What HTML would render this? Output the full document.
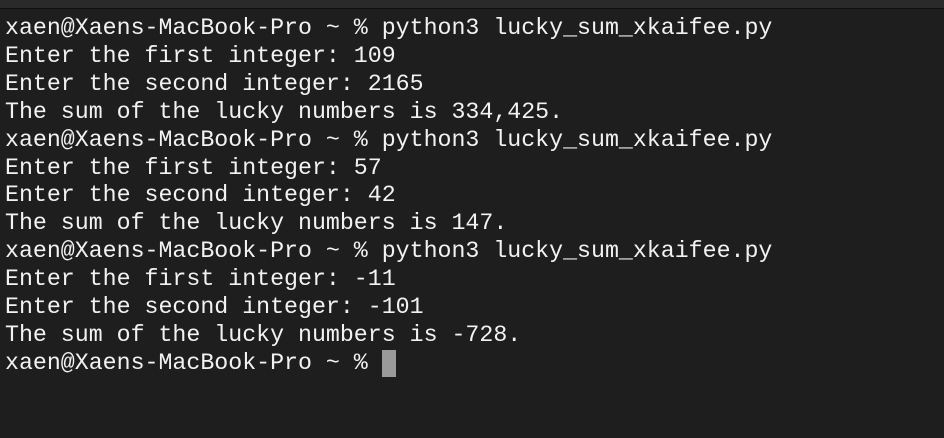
<html><head><style>
body{margin:0;width:944px;height:438px;background:#1e1e1e;overflow:hidden;position:relative}
.top{position:absolute;left:0;top:0;width:944px;height:8px;background:#2a2a2a;border-bottom:1px solid #111}
pre{position:absolute;left:5px;top:15px;margin:0;font-family:"Liberation Mono",monospace;font-size:23.25px;line-height:27.9px;color:#f2f2f2}
.cur{position:absolute;left:377px;top:335px;width:14px;height:27px;background:#9a9a9a}
</style></head><body><div class="top"></div>
<pre>xaen@Xaens-MacBook-Pro ~ % python3 lucky_sum_xkaifee.py
Enter the first integer: 109
Enter the second integer: 2165
The sum of the lucky numbers is 334,425.
xaen@Xaens-MacBook-Pro ~ % python3 lucky_sum_xkaifee.py
Enter the first integer: 57
Enter the second integer: 42
The sum of the lucky numbers is 147.
xaen@Xaens-MacBook-Pro ~ % python3 lucky_sum_xkaifee.py
Enter the first integer: -11
Enter the second integer: -101
The sum of the lucky numbers is -728.
xaen@Xaens-MacBook-Pro ~ %<span class="cur"></span></pre>
</body></html>
